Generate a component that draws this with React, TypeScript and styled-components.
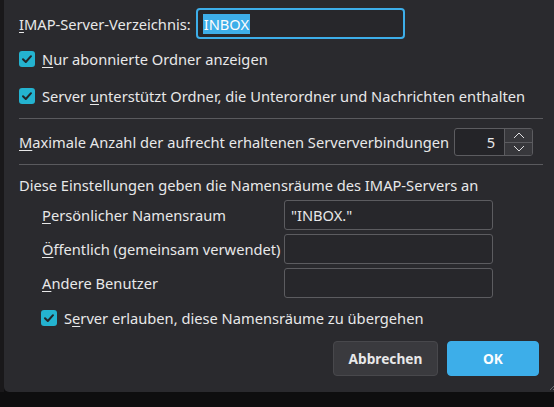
import React from "react";
import styled, { createGlobalStyle } from "styled-components";

const Global = createGlobalStyle`
  html, body {
    margin: 0;
    padding: 0;
    background: #0e0e0f;
    overflow: hidden;
  }
  body {
    font-family: "Noto Sans", "DejaVu Sans", sans-serif;
    font-size: 14.67px;
    color: #e8e8e9;
  }
  u { text-underline-offset: 2px; text-decoration-thickness: 1px; }
`;

const Page = styled.div`
  width: 554px;
  height: 407px;
  display: flex;
  background: #0e0e0f;
  overflow: hidden;
`;

const LeftStrip = styled.div`
  width: 4px;
  height: 392px;
  background: #19181a;
  flex: none;
`;

const Dialog = styled.div`
  position: relative;
  width: 560px;
  height: 392px;
  flex: none;
  box-sizing: border-box;
  background: #2a2a2e;
  border-bottom-left-radius: 5px;
  padding: 8px 0 0 15px;
  display: flex;
  flex-direction: column;
`;

const Content = styled.div`
  width: 524px;
  display: flex;
  flex-direction: column;
`;

const Row = styled.div<{ $mt?: number; $h: number }>`
  display: flex;
  align-items: center;
  gap: 5px;
  height: ${(p) => p.$h}px;
  margin-top: ${(p) => p.$mt ?? 0}px;
  white-space: nowrap;
`;

const Label = styled.span`
  white-space: nowrap;
`;

const MainInput = styled.div`
  width: 209px;
  height: 31px;
  box-sizing: border-box;
  border: 2px solid #3daee9;
  border-radius: 4px;
  display: flex;
  align-items: center;
  padding-left: 5px;
  background: #27272b;
`;

const Selected = styled.span`
  background: #3daee9;
  color: #fdfdfd;
  padding: 0 1px;
  line-height: 20px;
`;

const CheckRow = styled.label<{ $mt?: number; $indent?: number }>`
  display: flex;
  align-items: center;
  gap: 7px;
  height: 24px;
  margin-top: ${(p) => p.$mt ?? 0}px;
  padding-left: ${(p) => p.$indent ?? 0}px;
  white-space: nowrap;
`;

const Box = styled.span`
  width: 16px;
  height: 16px;
  border-radius: 3px;
  background: #24b3d0;
  display: flex;
  align-items: center;
  justify-content: center;
  flex: none;
`;

const Separator = styled.div<{ $mt: number }>`
  height: 1px;
  background: #5a5a5e;
  margin-top: ${(p) => p.$mt}px;
`;

const Spin = styled.div`
  width: 79px;
  height: 28px;
  box-sizing: border-box;
  border: 1px solid #5c5c60;
  border-radius: 3px;
  display: flex;
  overflow: hidden;
  background: #242428;
`;

const SpinValue = styled.div`
  flex: 1;
  display: flex;
  align-items: center;
  justify-content: flex-end;
  padding-right: 9px;
`;

const SpinButtons = styled.div`
  width: 27px;
  display: flex;
  flex-direction: column;
  border-left: 1px solid #5c5c60;
`;

const SpinButton = styled.div<{ $top?: boolean }>`
  flex: 1;
  display: flex;
  align-items: center;
  justify-content: center;
  background: #38383c;
  border-bottom: ${(p) => (p.$top ? "1px solid #5c5c60" : "none")};
`;

const Intro = styled.div`
  height: 20px;
  margin-top: 10px;
  display: flex;
  align-items: center;
  white-space: nowrap;
`;

const NsGrid = styled.div`
  margin-top: 5px;
  padding-left: 23px;
  display: grid;
  grid-template-columns: 242px 209px;
  grid-auto-rows: 30px;
  row-gap: 4px;
  align-items: center;
`;

const Field = styled.div`
  height: 30px;
  box-sizing: border-box;
  border: 1px solid #5c5c60;
  border-radius: 3px;
  background: #27272b;
  display: flex;
  align-items: center;
  padding-left: 6px;
`;

const Buttons = styled.div`
  margin-top: 11px;
  width: 520px;
  display: flex;
  justify-content: flex-end;
  gap: 9px;
`;

const Button = styled.button<{ $primary?: boolean; $w: number }>`
  width: ${(p) => p.$w}px;
  height: 35px;
  box-sizing: border-box;
  border-radius: 4px;
  font-family: "Noto Sans", "DejaVu Sans", sans-serif;
  font-size: 13.7px;
  font-weight: 700;
  cursor: pointer;
  color: ${(p) => (p.$primary ? "#fcfdfe" : "#e8e8e9")};
  background: ${(p) => (p.$primary ? "#3daee9" : "#3a3a3e")};
  border: 1px solid ${(p) => (p.$primary ? "#3daee9" : "#48484c")};
`;

const Grip = styled.svg`
  position: absolute;
  right: 7px;
  bottom: 1px;
`;

const Check = () => (
  <Box>
    <svg width="12" height="12" viewBox="0 0 12 12">
      <path d="M2 6.2 L4.8 9 L10 3.2" fill="none" stroke="#232629" strokeWidth="2" strokeLinecap="round" strokeLinejoin="round" />
    </svg>
  </Box>
);

export default function App() {
  return (
    <>
      <Global />
      <Page>
        <LeftStrip />
        <Dialog>
          <Content>
            <Row $h={31}>
              <Label>
                <u>I</u>MAP-Server-Verzeichnis:
              </Label>
              <MainInput>
                <Selected>INBOX</Selected>
              </MainInput>
            </Row>
            <CheckRow $mt={8}>
              <Check />
              <span>
                <u>N</u>ur abonnierte Ordner anzeigen
              </span>
            </CheckRow>
            <CheckRow $mt={13}>
              <Check />
              <span>
                Server <u>u</u>nterstützt Ordner, die Unterordner und Nachrichten enthalten
              </span>
            </CheckRow>
            <Separator $mt={10} />
            <Row $mt={9} $h={28}>
              <Label>
                <u>M</u>aximale Anzahl der aufrecht erhaltenen Serververbindungen
              </Label>
              <Spin>
                <SpinValue>5</SpinValue>
                <SpinButtons>
                  <SpinButton $top>
                    <svg width="12" height="7" viewBox="0 0 12 7">
                      <path d="M1 6 L6 1 L11 6" fill="none" stroke="#e0e0e2" strokeWidth="1" />
                    </svg>
                  </SpinButton>
                  <SpinButton>
                    <svg width="12" height="7" viewBox="0 0 12 7">
                      <path d="M1 1 L6 6 L11 1" fill="none" stroke="#e0e0e2" strokeWidth="1" />
                    </svg>
                  </SpinButton>
                </SpinButtons>
              </Spin>
            </Row>
            <Separator $mt={8} />
            <Intro>Diese Einstellungen geben die Namensräume des IMAP-Servers an</Intro>
            <NsGrid>
              <Label>
                <u>P</u>ersönlicher Namensraum
              </Label>
              <Field>"INBOX."</Field>
              <Label>
                <u>Ö</u>ffentlich (gemeinsam verwendet)
              </Label>
              <Field />
              <Label>
                <u>A</u>ndere Benutzer
              </Label>
              <Field />
            </NsGrid>
            <CheckRow $mt={8} $indent={22}>
              <Check />
              <span>
                S<u>e</u>rver erlauben, diese Namensräume zu übergehen
              </span>
            </CheckRow>
            <Buttons>
              <Button $w={105}>Abbrechen</Button>
              <Button $w={92} $primary>
                OK
              </Button>
            </Buttons>
          </Content>
          <Grip width="9" height="9" viewBox="0 0 9 9">
            <path d="M8 2 L2 8 M8 5 L5 8" stroke="#6a6a6e" strokeWidth="1" />
          </Grip>
        </Dialog>
      </Page>
    </>
  );
}
